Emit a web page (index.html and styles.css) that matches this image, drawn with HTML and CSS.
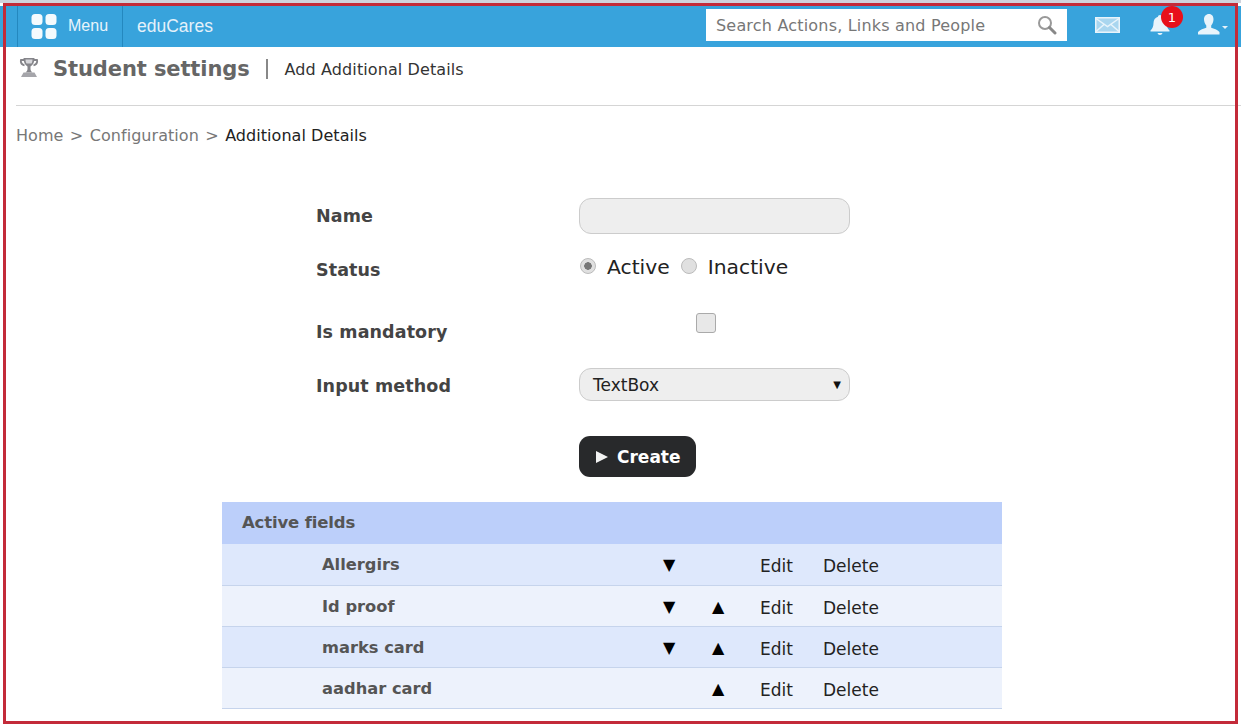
FILE: index.html
```html
<!DOCTYPE html>
<html lang="en">
<head>
<meta charset="utf-8">
<title>Student settings</title>
<link rel="stylesheet" href="styles.css">
</head>
<body>
<div class="page">
  <header class="topbar">
    <div class="menu">
      <svg class="menu-icon" width="26" height="25" viewBox="0 0 26 25"><rect x="0.5" y="0" width="11" height="11" rx="3.5"/><rect x="14.5" y="0" width="11" height="11" rx="3.5"/><rect x="0.5" y="14" width="11" height="11" rx="3.5"/><rect x="14.5" y="14" width="11" height="11" rx="3.5"/></svg>
      <span>Menu</span>
    </div>
    <div class="brand">eduCares</div>
    <div class="top-right">
      <div class="search">
        <span>Search Actions, Links and People</span>
        <svg width="20" height="20" viewBox="0 0 20 20"><circle cx="8" cy="8" r="6" fill="none" stroke="#999" stroke-width="2"/><path d="M12.5 12.5L18 18" stroke="#888" stroke-width="3" stroke-linecap="round"/></svg>
      </div>
      <svg class="mail" width="25" height="16" viewBox="0 0 25 16"><rect x=".75" y=".75" width="23.500" height="14.500" fill="#a9d6ef" stroke="#e8f4fb" stroke-width="1.500"/><path d="M1 1.500 12.500 9.500 24 1.500M1 14.500 9 7.500M24 14.500 16 7.500" fill="none" stroke="#e8f4fb" stroke-width="1.500"/></svg>
      <div class="bell">
        <svg width="22" height="20" viewBox="0 0 22 20"><path fill="#e8f4fb" d="M11 0c1.200 0 2 .8 2 1.700 3 .9 4.500 3.300 4.500 6.300 0 3.500 1 5.500 3 7.500v1H1.500v-1c2-2 3-4 3-7.500 0-3 1.500-5.400 4.500-6.300C9 .8 9.800 0 11 0ZM8.500 18h5c-.3 1.200-1.300 2-2.500 2s-2.200-.8-2.500-2Z"/></svg>
        <span class="badge">1</span>
      </div>
      <div class="user">
        <svg width="22" height="22" viewBox="0 0 22 22"><path fill="#e8f4fb" d="M11 0c3 0 4.500 2.300 4.500 5.200 0 2.500-1 5-2.300 6.300v2.300c2.700.8 6.300 2 8.300 4.200v2.500H0V18c2-2.200 5.600-3.400 8.300-4.200v-2.300C7 10.200 6 7.700 6 5.200 6 2.300 8 0 11 0Z"/></svg>
        <i class="caret"></i>
      </div>
    </div>
  </header>

  <section class="title-row">
    <svg class="title-icon" width="20" height="21" viewBox="0 0 20 21"><path fill="none" stroke="#85858a" stroke-width="1.800" d="M5 3H2c-.6 2.500.6 4.500 3.500 5.500M15 3h3c.6 2.500-.6 4.500-3.500 5.500"/><path fill="#85858a" d="M4.500 1h11c0 4-1.300 7-4 8.500V12c0 1.500.8 2.500 2 3.500h-7c1.200-1 2-2 2-3.500V9.500C5.800 8 4.500 5 4.500 1Z"/><path fill="#d6d6da" d="M6.500 2.500h7c0 1.500-.4 3-1 4h-5c-.6-1-1-2.500-1-4Z"/><path fill="#a5a5aa" d="M4.500 15.500h11L18 20H2Z"/></svg>
    <h1>Student settings</h1>
    <span class="divider"></span>
    <span class="subtitle">Add Additional Details</span>
  </section>

  <nav class="breadcrumb"><span>Home</span><span>&gt;</span><span>Configuration</span><span>&gt;</span><span class="current">Additional Details</span></nav>

  <form class="form">
    <div class="row row-name"><label>Name</label><div class="control"><div class="input"></div></div></div>
    <div class="row row-status"><label>Status</label>
      <div class="control radios">
        <i class="radio on"></i><span class="radio-text first">Active</span>
        <i class="radio"></i><span class="radio-text">Inactive</span>
      </div>
    </div>
    <div class="row row-mand"><label>Is mandatory</label><div class="control check-wrap"><i class="check"></i></div></div>
    <div class="row row-method"><label>Input method</label>
      <div class="control"><div class="select"><span>TextBox</span><span class="sel-arrow">▼</span></div></div>
    </div>
    <div class="row row-create"><span class="spacer"></span><div class="control"><div class="button"><i class="play"></i>Create</div></div></div>
  </form>

  <section class="table">
    <div class="thead">Active fields</div>
    <div class="tr first-row"><span class="name">Allergirs</span><span class="cell-down">▼</span><span class="cell-up"></span><span class="edit">Edit</span><span class="del">Delete</span></div>
    <div class="tr alt"><span class="name">Id proof</span><span class="cell-down">▼</span><span class="cell-up">▲</span><span class="edit">Edit</span><span class="del">Delete</span></div>
    <div class="tr"><span class="name">marks card</span><span class="cell-down">▼</span><span class="cell-up">▲</span><span class="edit">Edit</span><span class="del">Delete</span></div>
    <div class="tr alt"><span class="name">aadhar card</span><span class="cell-down"></span><span class="cell-up">▲</span><span class="edit">Edit</span><span class="del">Delete</span></div>
  </section>
  <div class="frame"></div>
</div>
</body>
</html>
```
FILE: styles.css
```css
* { box-sizing: border-box; }
html, body { margin: 0; height: 100%; overflow: hidden; background: #fff; }
body { font-family: "DejaVu Sans", Verdana, sans-serif; font-size: 16px; color: #444; }
.page { position: relative; width: 1241px; height: 725px; overflow: hidden; padding-top: 3px; border-top: 3px solid #cfd2dc; }

.topbar { display: flex; align-items: center; height: 41px; background: #38a3dc; color: #fff; padding-left: 17px; }
.menu { display: flex; align-items: center; gap: 11px; height: 41px; width: 106px; padding-left: 13px; border-left: 1px solid #2488bf; border-right: 1px solid #2488bf; font-family: "Liberation Sans", Arial, sans-serif; font-size: 16px; color: #e8f4fb; }
.menu span { margin-top: -2px; }
.menu-icon { fill: #f4fafd; flex: none; }
.brand { margin-left: 14px; font-family: "Liberation Sans", Arial, sans-serif; font-size: 17.500px; color: #e4f1fa; }
.top-right { margin-left: auto; display: flex; align-items: center; }
.search { display: flex; align-items: center; justify-content: space-between; width: 361px; height: 32px; padding: 0 10px 0 10px; background: #fff; font-size: 16px; color: #777; margin-top: -3px; }
.search span { white-space: nowrap; letter-spacing: .19px; }
.mail { margin-left: 28px; margin-top: -3px; }
.bell { position: relative; margin-left: 29px; margin-top: -3px; height: 20px; width: 22px; }
.badge { position: absolute; left: 12px; top: -9px; width: 22px; height: 22px; border-radius: 50%; background: #e8101a; color: #fff; font-size: 13px; display: flex; align-items: center; justify-content: center; }
.user { margin-left: 27px; margin-right: 12px; width: 31px; display: flex; align-items: flex-end; gap: 2px; margin-top: -3px; }
.caret { width: 0; height: 0; margin-bottom: 7px; border-left: 3px solid transparent; border-right: 3px solid transparent; border-top: 3px solid #e4f1fa; }

.title-row { display: flex; align-items: center; height: 43px; padding-left: 19px; }
.title-icon { flex: none; margin-top: -3px; }
h1 { margin: 0 0 0 14px; font-size: 21px; font-weight: bold; color: #666; letter-spacing: -.1px; }
.divider { width: 2px; height: 20px; margin: 0 17px 0 16px; background: #888; }
.subtitle { margin-top: 2px; font-size: 16px; color: #333; letter-spacing: .1px; }

.breadcrumb { display: flex; gap: 6.400px; margin: 15px 0 0 16px; padding-top: 20px; border-top: 1px solid #d5d5d5; font-size: 16px; line-height: 19px; color: #777; letter-spacing: .05px; }
.current { color: #222; }

.form { margin: 53px 0 0 316px; }
.row { display: flex; }
.row label, .spacer { width: 263px; flex: none; font-size: 17.500px; font-weight: bold; color: #444; letter-spacing: .1px; }
.control { width: 271px; }
.row-name { align-items: center; height: 36px; }
.input { height: 36px; background: #eee; border: 1px solid #ccc; border-radius: 12px; }
.row-status { margin-top: 19px; height: 36px; }
.row-status label { padding-top: 7px; }
.radios { display: flex; align-items: center; height: 28px; font-size: 20.300px; color: #222; }
.radio { width: 16px; height: 16px; margin-left: 1px; border-radius: 50%; background: #e0e0e0; border: 1px solid #bbb; flex: none; margin-top: -2px; }
.radio.on { background: radial-gradient(circle, #777 0 3.500px, #e0e0e0 4px); }
.radio-text { margin-left: 11px; }
.radio-text.first { margin-right: 10px; }
.row-mand { margin-top: 24px; height: 36px; }
.row-mand label { padding-top: 9px; }
.check-wrap { padding-left: 117px; }
.check { display: block; width: 20px; height: 20px; background: #e8e8e8; border: 1px solid #aaa; border-radius: 3px; }
.row-method { margin-top: 18px; height: 35px; align-items: center; }
.row-method label { padding-top: 2px; }
.select { display: flex; justify-content: space-between; align-items: center; height: 33px; padding: 0 8px 0 13px; background: #eee; border: 1px solid #ccc; border-radius: 12px; font-size: 17px; color: #222; }
.sel-arrow { font-size: 10px; color: #111; }
.row-create { margin-top: 34px; }
.button { display: inline-flex; align-items: center; gap: 9px; height: 41px; width: 117px; padding-left: 17px; background: #28292b; border-radius: 11px; color: #fff; font-size: 17px; font-weight: bold; }
.play { width: 0; height: 0; border-left: 12px solid #f2f2f2; border-top: 6.500px solid transparent; border-bottom: 6.500px solid transparent; }

.table { width: 780px; margin: 25px 0 0 222px; }
.thead { height: 42px; padding-left: 20px; background: #bccffa; font-size: 16.500px; font-weight: bold; color: #555; line-height: 42px; letter-spacing: -.15px; }
.tr { display: flex; align-items: center; height: 41px; padding-top: 4px; background: #dee8fc; border-bottom: 1px solid #c6d4ec; font-size: 17px; color: #222; }
.tr.first-row { height: 42px; padding-bottom: 1px; }
.tr.alt { background: #edf2fc; }
.name { width: 341px; margin-left: 100px; font-weight: bold; font-size: 16.300px; color: #555; margin-top: -4px; }
.cell-down, .cell-up { width: 49px; font-size: 16px; color: #000; flex: none; margin-top: -3px; }
.cell-up { width: 48px; }
.edit { width: 63px; }

.frame { position: absolute; left: 3px; top: 0; width: 1235px; height: 721px; border: 3px solid #c32a39; pointer-events: none; }
```
